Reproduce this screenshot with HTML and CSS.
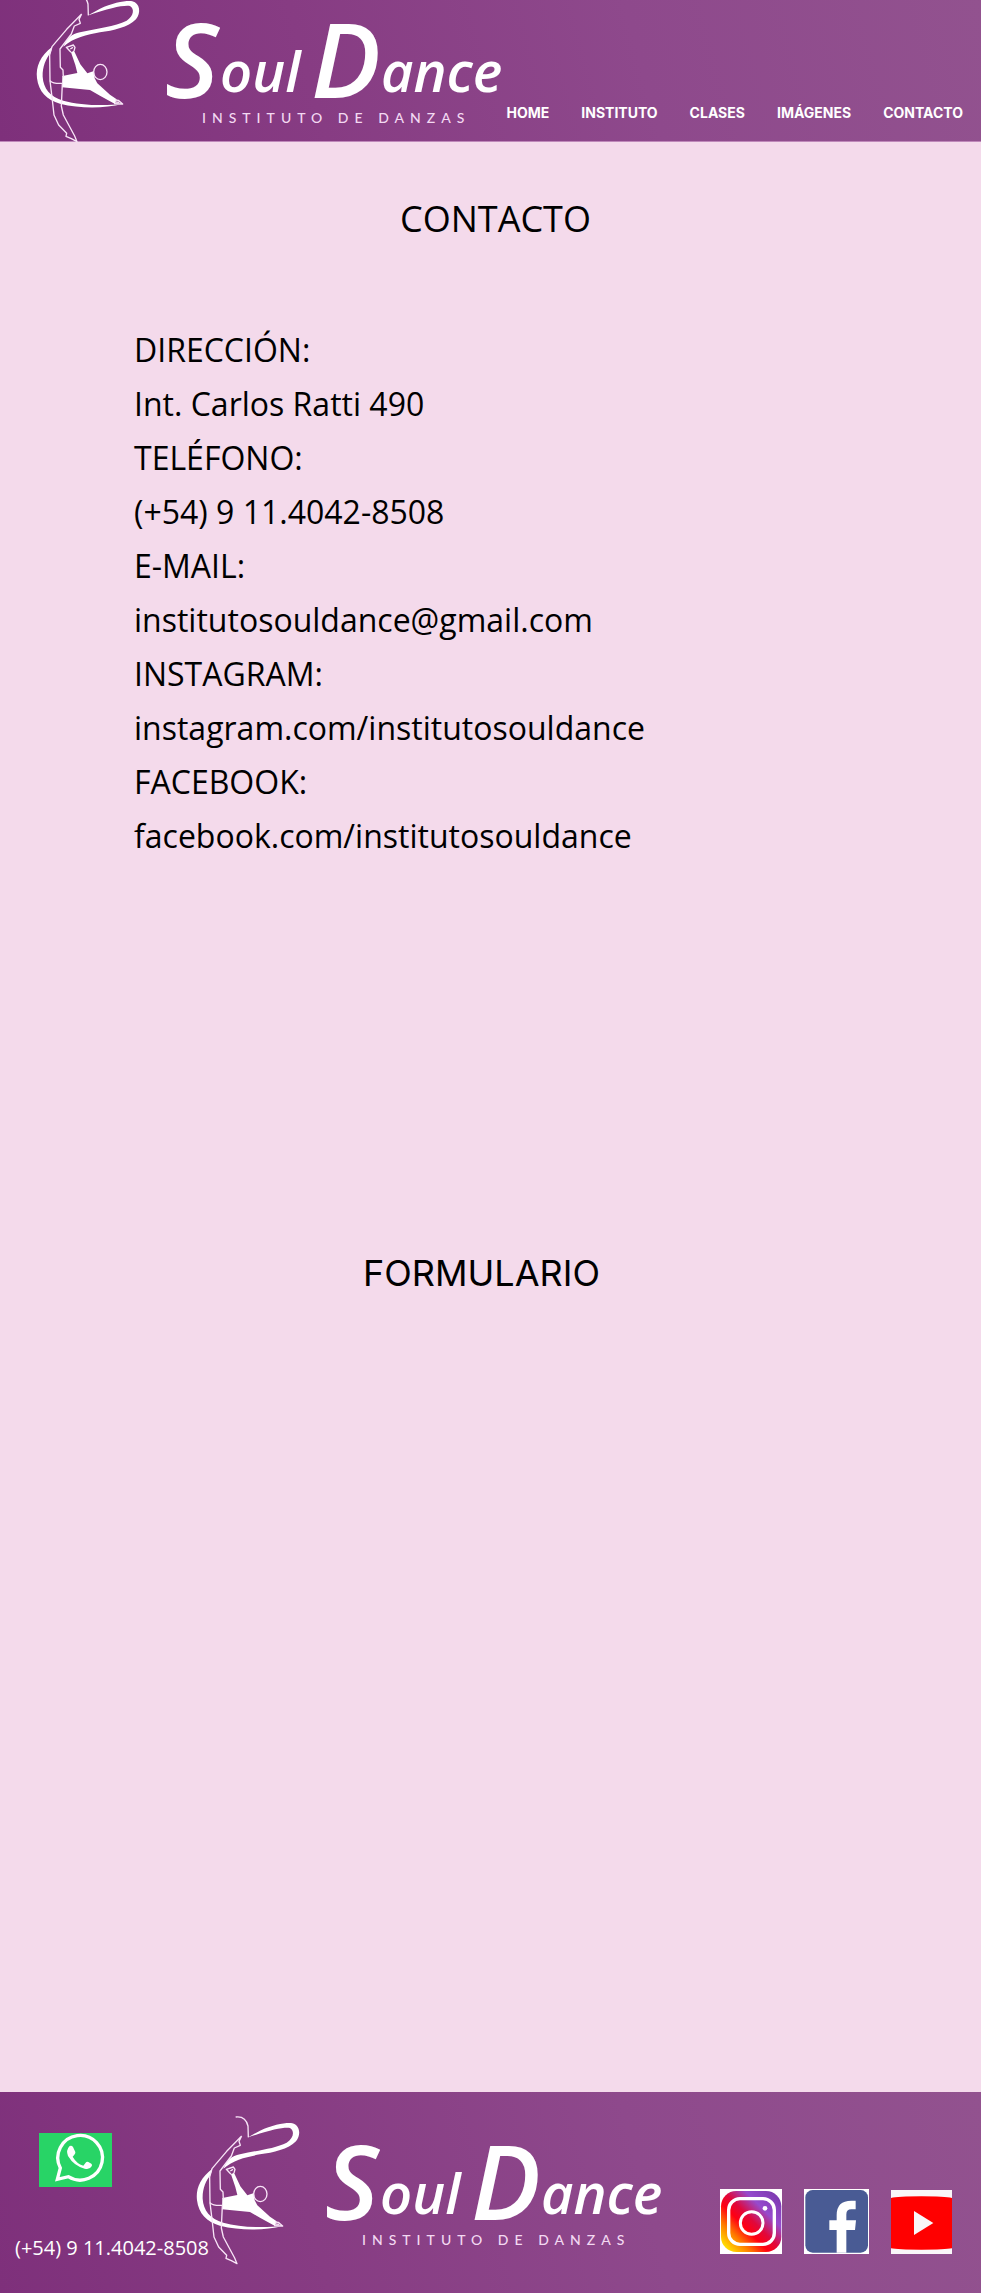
FILE: index.html
```html
<!DOCTYPE html>
<html lang="es">
<head>
<meta charset="utf-8">
<meta name="viewport" content="width=device-width, initial-scale=1">
<title>Soul Dance - Contacto</title>
<link rel="stylesheet" href="styles.css">
</head>
<body>
<header class="site-header">
  <a class="brand" href="#" aria-label="Soul Dance, Instituto de Danzas">
    <svg width="468" height="141" viewBox="36 0 468 141">
      <g id="logo">
        <g transform="scale(.3333)" fill="#fff">
          <path d="M262 47L300 26C340 8 380 1 397 4C420 10 424 38 408 58C385 82 340 92 300 97C260 105 222 112 190 140C200 115 215 101 240 97C290 85 345 80 380 62C402 48 404 26 390 18C370 15 330 24 262 47Z"/>
          <path d="M157 140C120 168 107 200 111 235C116 275 140 300 180 311C240 326 310 326 368 312C310 318 240 316 190 302C150 290 130 265 128 230C127 200 138 175 152 158Z"/>
          <path d="M187 228L232 219L226 195L213 157L222 152L241 193L262 220L282 213L284 235L292 250L330 284L350 298L345 312L300 287L270 270L186 262Z"/>
          <g fill="none" stroke="#f8e4f7" stroke-width="4" stroke-linejoin="round">
            <path d="M227 -15C250 -18 260 -5 264 12L265 46"/>
            <path d="M245 42L200 88L156 140L149 165L150 242Q160 252 188 250M245 42L237 58L241 70L223 78L214 102L180 147L181 202L189 210L190 232"/>
            <path d="M150 242L157 300L162 345L176 375L200 400L198 409L214 416L231 425L224 408L190 345L184 318L187 252"/>
            <path d="M213 157L199 142L220 135L225 142L222 153M211 147L219 142M345 300L355 301L368 312L342 311M346 306L358 307"/>
            <ellipse cx="301" cy="216" rx="20" ry="23"/>
          </g>
        </g>
        <g class="wordmark">
          <text class="initial" x="165" y="98">S</text>
          <text class="letters" x="220" y="92">oul</text>
          <text class="initial" x="311" y="98">D</text>
          <text class="letters" x="381" y="92">ance</text>
        </g>
        <text class="tagline" x="202" y="123">INSTITUTO DE DANZAS</text>
      </g>
    </svg>
  </a>
  <nav class="menu">
    <a href="#">HOME</a>
    <a href="#">INSTITUTO</a>
    <a href="#">CLASES</a>
    <a href="#">IMÁGENES</a>
    <a href="#contacto">CONTACTO</a>
  </nav>
</header>
<main>
  <section class="contact" id="contacto">
    <h1>CONTACTO</h1>
    <dl>
      <dt>DIRECCIÓN:</dt><dd>Int. Carlos Ratti 490</dd>
      <dt>TELÉFONO:</dt><dd>(+54) 9 11.4042-8508</dd>
      <dt>E-MAIL:</dt><dd>institutosouldance@gmail.com</dd>
      <dt>INSTAGRAM:</dt><dd>instagram.com/institutosouldance</dd>
      <dt>FACEBOOK:</dt><dd>facebook.com/institutosouldance</dd>
    </dl>
  </section>
  <section class="form-section">
    <h2>FORMULARIO</h2>
  </section>
</main>
<footer class="site-footer">
  <div class="phone">
    <a class="whatsapp" href="#" aria-label="WhatsApp">
      <svg width="73" height="54" viewBox="0 0 219 162">
        <path fill="#28d466" d="M0 0H219V162H0Z"/>
        <path fill="none" stroke="#fff" stroke-width="10" d="M55 139L64 105A67 67 0 1 1 88 131Z"/>
        <path fill="#fff" d="M92 39Q98 36 102 42L109 57Q110 61 106 65L101 71Q113 92 133 98L140 89Q143 85 148 87L157 92Q161 95 158 100Q152 111 137 107Q105 99 87 69Q80 51 92 39Z"/>
      </svg>
    </a>
    <span>(+54) 9 11.4042-8508</span>
  </div>
  <svg class="footer-logo" width="468" height="152" viewBox="36 -8 468 152" role="img" aria-label="Soul Dance"><use href="#logo"/></svg>
  <div class="social">
    <a href="#" aria-label="Instagram">
      <svg width="62" height="65" viewBox="0 0 186 195">
        <defs>
          <linearGradient id="ig" x1="0" y1="1" x2="1" y2="0">
            <stop offset=".08" stop-color="#fd0"/><stop offset=".25" stop-color="#ff7a00"/><stop offset=".4" stop-color="#ff0012"/><stop offset=".52" stop-color="#e0083c"/><stop offset=".7" stop-color="#964bcd"/><stop offset="1" stop-color="#7635a8"/>
          </linearGradient>
        </defs>
        <path fill="#fff" d="M0 0H186V195H0Z"/>
        <rect x="3" y="6" width="181" height="183" rx="46" fill="url(#ig)"/>
        <g fill="none" stroke="#fff"><rect x="26" y="29" width="137" height="137" rx="34" stroke-width="10"/><circle cx="95" cy="102" r="34" stroke-width="9"/></g>
        <circle cx="135" cy="58" r="7" fill="#fff"/>
      </svg>
    </a>
    <a href="#" aria-label="Facebook">
      <svg width="65" height="65" viewBox="0 0 195 195">
        <path fill="#fff" d="M0 0H195V195H0Z"/>
        <rect x="4" y="3" width="188" height="188" rx="22" fill="#495b94"/>
        <path fill="#fff" d="M98 191V123H76V94H98V78Q98 35 142 35H155V61H142Q127 61 127 76V94H156L153 123H127V191Z"/>
      </svg>
    </a>
    <a href="#" aria-label="YouTube">
      <svg width="61" height="64" viewBox="0 0 183 192">
        <path fill="#f9f7f8" d="M0 0H183V192H0Z"/>
        <path fill="#f00" d="M0 24Q20 19 91 19T183 24V175Q163 179 91 179T0 175Z"/>
        <path fill="#f9f7f8" d="M69 63L127 99L69 135Z"/>
      </svg>
    </a>
  </div>
</footer>
</body>
</html>
```
FILE: styles.css
```css
* {
  box-sizing: border-box;
}

body {
  margin: 0;
  min-height: 100vh;
  display: flex;
  flex-direction: column;
  background: #f4daeb;
  color: #000;
  font-family: "Open Sans", "Noto Sans", sans-serif;
}

h1,
h2,
dl,
dd {
  margin: 0;
  font-weight: 400;
}

svg {
  display: block;
  overflow: visible;
}

.site-header,
.site-footer {
  display: flex;
  background: linear-gradient(75deg, #7e307b 0%, #873c83 32%, #8e498c 65%, #92528f 100%);
}

.site-header {
  justify-content: space-between;
  align-items: flex-end;
  padding: 0 18px 0 36px;
  border-bottom: 1px solid #bf88ba;
}

.brand {
  flex: none;
}

.menu {
  display: flex;
  gap: 32px;
  padding-bottom: 20px;
}

.menu a {
  color: #fff;
  font: 700 14px/17px Inter, sans-serif;
  text-decoration: none;
}

.wordmark {
  fill: #fff;
  font-family: "Open Sans", sans-serif;
  font-style: italic;
  font-weight: 600;
}

.initial {
  font-size: 104px;
}

.letters {
  font-size: 56px;
}

.tagline {
  fill: #f3d9f2;
  font: 500 14px Lato, sans-serif;
  letter-spacing: 6px;
}

main {
  flex: 1;
}

.contact {
  padding: 53px 124px 0 134px;
}

h1,
h2 {
  text-align: center;
  font-size: 36px;
  line-height: 48px;
}

dl {
  padding-top: 80px;
  font-size: 32px;
  line-height: 54px;
}

.form-section {
  padding: 386px 18px 64px 0;
}

h2 {
  font-family: Inter, sans-serif;
}

.site-footer {
  min-height: 201px;
  padding: 22px 29px 27px 15px;
}

.phone {
  flex: none;
  width: 181px;
  display: flex;
  flex-direction: column;
  gap: 47px;
  padding-top: 19px;
  color: #fff;
  font-size: 20px;
  line-height: 27px;
  white-space: nowrap;
}

.whatsapp {
  padding-left: 24px;
}

.footer-logo {
  flex: none;
}

.social {
  display: flex;
  align-items: center;
  align-self: flex-end;
  gap: 22px;
  margin-left: auto;
  padding-bottom: 12px;
}
```
